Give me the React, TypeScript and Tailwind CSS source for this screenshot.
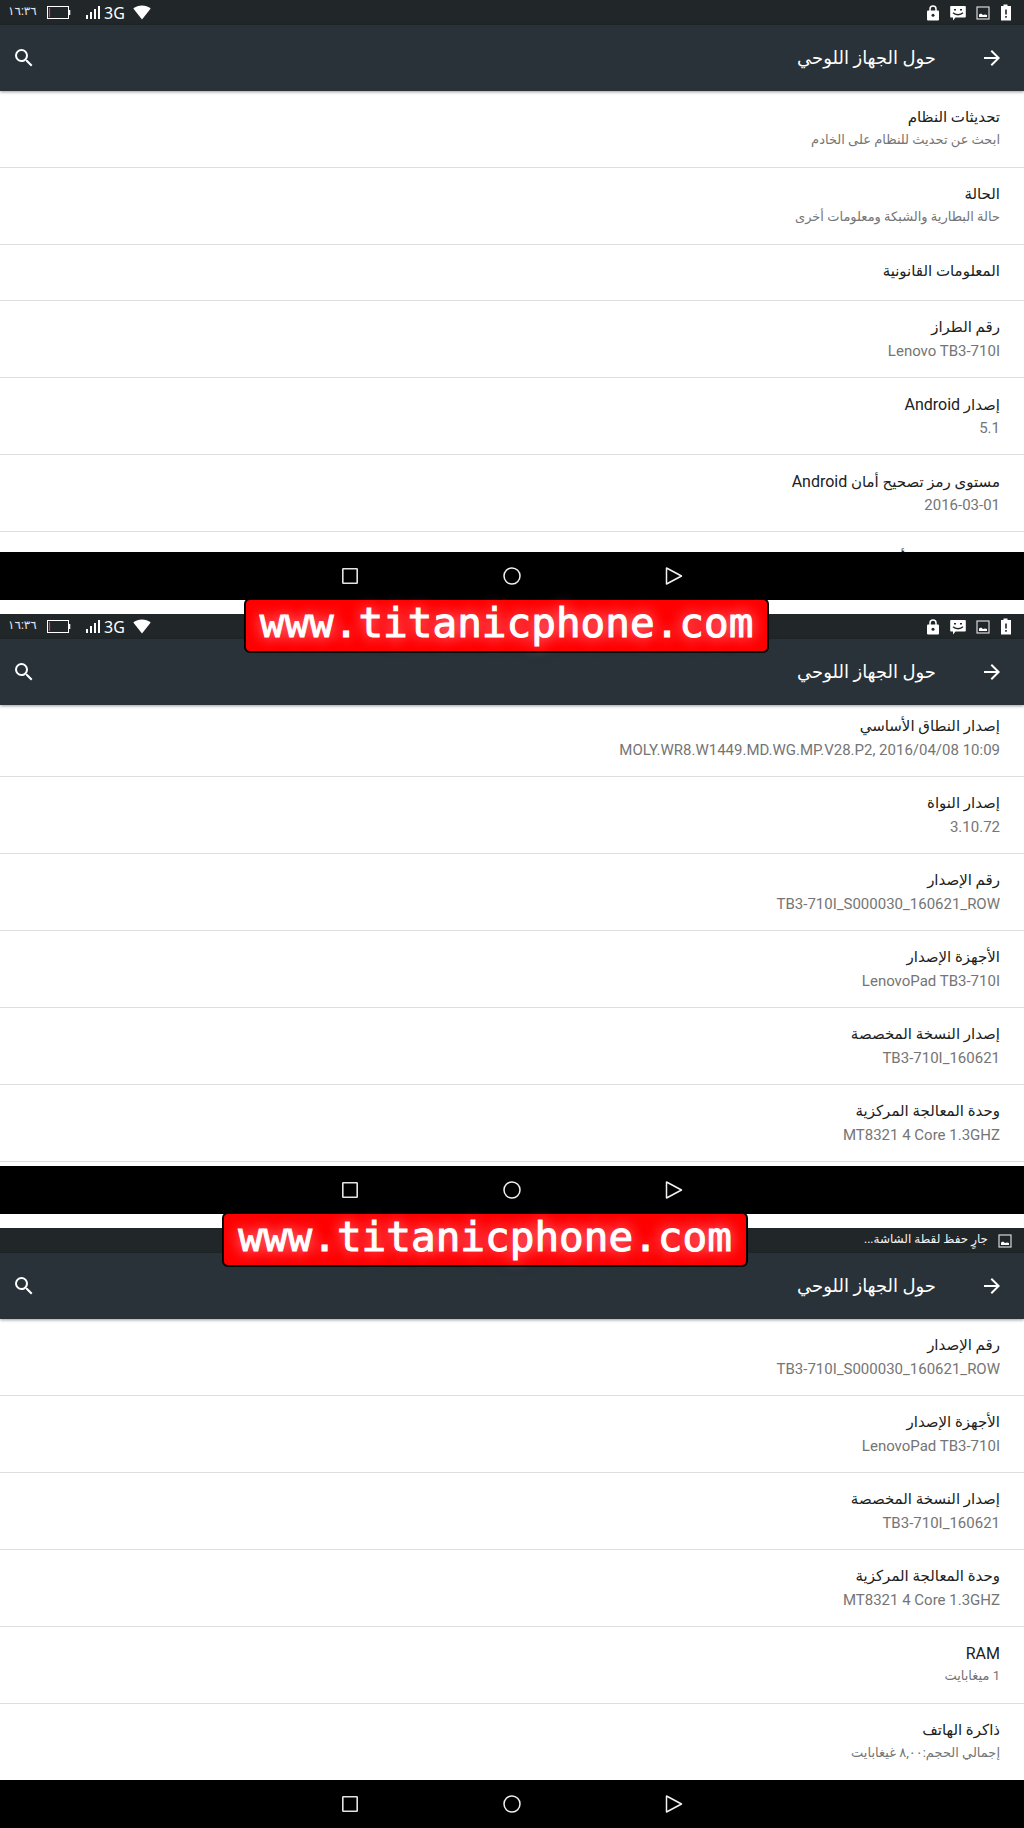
import type { ReactNode } from 'react';

type Row = { title: string; latin?: string; value?: string; arabicValue?: boolean };

const buildRows: Row[] = [
  { title: 'رقم الإصدار', value: 'TB3-710I_S000030_160621_ROW' },
  { title: 'الأجهزة الإصدار', value: 'LenovoPad TB3-710I' },
  { title: 'إصدار النسخة المخصصة', value: 'TB3-710I_160621' },
  { title: 'وحدة المعالجة المركزية', value: 'MT8321 4 Core 1.3GHZ' },
];

const baseband: Row = { title: 'إصدار النطاق الأساسي', value: 'MOLY.WR8.W1449.MD.WG.MP.V28.P2, 2016/04/08 10:09' };

const firstRows: Row[] = [
  { title: 'تحديثات النظام', value: 'ابحث عن تحديث للنظام على الخادم', arabicValue: true },
  { title: 'الحالة', value: 'حالة البطارية والشبكة ومعلومات أخرى', arabicValue: true },
  { title: 'المعلومات القانونية' },
  { title: 'رقم الطراز', value: 'Lenovo TB3-710I' },
  { title: 'إصدار', latin: 'Android', value: '5.1' },
  { title: 'مستوى رمز تصحيح أمان', latin: 'Android', value: '2016-03-01' },
  { title: 'إصدار النطاق الأساسي' },
];

const secondRows: Row[] = [baseband, { title: 'إصدار النواة', value: '3.10.72' }, ...buildRows];

const thirdRows: Row[] = [
  ...buildRows,
  { title: '', latin: 'RAM', value: '1 ميغابايت', arabicValue: true },
  { title: 'ذاكرة الهاتف', value: 'إجمالي الحجم:٨,٠٠ غيغابايت', arabicValue: true },
];

function PictureIcon() {
  return (
    <svg width="14" height="14" viewBox="0 0 14 14" fill="none">
      <rect x="1" y="1" width="12" height="12" stroke="#d5d7d8" strokeWidth="1.2" />
      <path d="M3 11V8.500l2-1 2 1.400L9 8.500l2 .5v2z" fill="#fff" />
    </svg>
  );
}

function StatusIcons() {
  return (
    <div className="flex items-center gap-2.5">
      <svg width="12" height="17" viewBox="0 0 12 17">
        <path d="M3.5 0.5h4v1.5H11V16.500H1V2h2.500z" fill="#fff" />
        <path d="M5.200 5.500h1.600v5H5.200zM5.200 12h1.600v1.700H5.200z" fill="#212629" />
      </svg>
      <PictureIcon />
      <svg width="16" height="16" viewBox="0 0 16 16">
        <path d="M1 1h14a.8.800 0 0 1 .8.800v10a.8.800 0 0 1-.8.800H5.500L3 15.500v-2.900H1a.8.800 0 0 1-.8-.8v-10A.8.800 0 0 1 1 1z" fill="#fff" />
        <path d="M4 4h2v1.600H4zM10 4h2v1.600h-2z" fill="#212629" />
        <path d="M3 7.800c2.500 2.600 7.500 2.600 10 0" fill="none" stroke="#212629" strokeWidth="1.300" />
      </svg>
      <svg width="14" height="16" viewBox="0 0 14 16">
        <path d="M4 7V4a3 3 0 0 1 6 0v3" fill="none" stroke="#fff" strokeWidth="1.500" />
        <rect x="1" y="5.500" width="12" height="10" rx="1" fill="#fff" />
        <circle cx="7" cy="10.300" r="1.500" fill="#212629" />
      </svg>
    </div>
  );
}

function SignalStatus() {
  return (
    <div dir="ltr" className="flex items-center text-white">
      <span className="w-[39px] pb-1 text-xs leading-4 text-gray-200">١٦:٣٦</span>
      <svg width="24" height="14" viewBox="0 0 24 14" fill="none">
        <rect x="0.500" y="0.500" width="21" height="12" stroke="#fff" />
        <path d="M22 4h1.300v5H22z" fill="#fff" />
        <path d="M2.500 2v9" stroke="#d8405f" strokeWidth="1.200" />
      </svg>
      <svg className="ml-[15px]" width="14" height="14" viewBox="0 0 14 14" fill="#fff">
        <path d="M0 9h2v4H0zM4 6h2v7H4zM8 3h2v10H8zM12 0h2v13h-2z" />
      </svg>
      <span className="ml-1 font-['Noto_Sans'] text-base leading-6">3G</span>
      <svg className="ml-2" width="18" height="15" viewBox="0 0 18 15">
        <path d="M9 14.500L0.300 3.600C2.800 1.500 5.700 0.400 9 0.400s6.200 1.100 8.700 3.200z" fill="#fff" />
      </svg>
    </div>
  );
}

function Toolbar() {
  return (
    <header className="relative z-10 flex h-[66px] shrink-0 items-center bg-[#283238] pr-5 pl-3 text-white shadow-[0_1px_3px_rgba(0,0,0,0.4)]">
      <button aria-label="رجوع">
        <svg width="24" height="24" viewBox="0 0 24 24" fill="#fff">
          <path d="M12 4l-1.410 1.410L16.170 11H4v2h12.170l-5.580 5.590L12 20l8-8z" />
        </svg>
      </button>
      <h1 className="mr-11 flex-1 text-lg leading-7">حول الجهاز اللوحي</h1>
      <button aria-label="بحث">
        <svg width="24" height="24" viewBox="0 0 24 24" fill="#fff">
          <path d="M15.500 14h-.79l-.28-.27A6.471 6.471 0 0 0 16 9.500 6.500 6.500 0 1 0 9.500 16c1.610 0 3.090-.59 4.230-1.570l.27.28v.79l5 4.990L20.490 19l-4.990-5zm-6 0C7.010 14 5 11.990 5 9.500S7.010 5 9.500 5 14 7.010 14 9.500 11.990 14 9.500 14z" />
        </svg>
      </button>
    </header>
  );
}

function NavBar() {
  return (
    <nav dir="ltr" className="flex h-12 shrink-0 items-center justify-center gap-[138px] bg-black">
      <button aria-label="التطبيقات الأخيرة">
        <svg width="24" height="24" viewBox="0 0 24 24" fill="none">
          <rect x="4.800" y="4.800" width="14.400" height="14.400" rx="0.500" stroke="#e4e4e4" strokeWidth="1.600" />
        </svg>
      </button>
      <button aria-label="الشاشة الرئيسية">
        <svg width="24" height="24" viewBox="0 0 24 24" fill="none">
          <circle cx="12" cy="12" r="8" stroke="#f2f2f2" strokeWidth="1.500" />
        </svg>
      </button>
      <button aria-label="السابق">
        <svg width="24" height="24" viewBox="0 0 24 24" fill="none">
          <path d="M4.500 4v16L19.500 12z" stroke="#f2f2f2" strokeWidth="1.500" strokeLinejoin="round" />
        </svg>
      </button>
    </nav>
  );
}

function SettingsRow({ row }: { row: Row }) {
  return (
    <li className={`border-b border-[#dedede] px-6 ${row.latin ? 'pt-4' : 'pt-3.5'} ${row.value ? 'min-h-[77px]' : 'min-h-14'}`}>
      <p className={`text-[15px] text-[#212121] ${row.latin ? 'leading-[22px]' : 'leading-6'}`}>
        {row.title} {row.latin && <span className="text-base leading-none">{row.latin}</span>}
      </p>
      {row.value && (
        <p className={row.arabicValue ? 'text-[13px] leading-[22px] text-[#757575]' : 'text-[15px] leading-6 text-[#757575]'}>
          <bdi>{row.value}</bdi>
        </p>
      )}
    </li>
  );
}

function SettingsList({ rows, scrolled }: { rows: Row[]; scrolled?: boolean }) {
  return (
    <main className="min-h-0 flex-1 overflow-hidden bg-white">
      <ul className={scrolled ? '-mt-[5px]' : ''}>
        {rows.map((row) => (
          <SettingsRow key={row.title} row={row} />
        ))}
      </ul>
    </main>
  );
}

function Screen({ status, children }: { status: ReactNode; children: ReactNode }) {
  return (
    <section className="flex aspect-[128/75] w-full flex-col overflow-hidden">
      <div className="flex h-[25px] shrink-0 items-center justify-between bg-[#212629] pr-3 pl-2">{status}</div>
      <Toolbar />
      {children}
      <NavBar />
    </section>
  );
}

function Banner() {
  return (
    <a
      href="#"
      dir="ltr"
      className="flex h-[55px] items-center rounded-md border-2 border-black bg-[#fe0000] px-3.5 pb-1 font-['DejaVu_Sans_Mono',monospace] text-[41px] leading-none text-white [-webkit-text-stroke:1px_white] [text-shadow:0_0_14px_rgba(255,150,170,0.8),0_0_18px_rgba(255,140,160,0.6)]"
    >
      www.titanicphone.com
    </a>
  );
}

export default function App() {
  return (
    <div dir="rtl" className="flex flex-col gap-3.5 bg-white font-[Roboto,'Noto_Sans','DejaVu_Sans',sans-serif]">
      <div className="relative">
        <Screen status={<><StatusIcons /><SignalStatus /></>}>
          <SettingsList rows={firstRows} />
        </Screen>
        <div className="absolute top-full left-[23.8%] z-20 -mt-0.5">
          <Banner />
        </div>
      </div>
      <div className="relative">
        <Screen status={<><StatusIcons /><SignalStatus /></>}>
          <SettingsList rows={secondRows} scrolled />
        </Screen>
        <div className="absolute top-full left-[21.7%] z-20 -mt-0.5">
          <Banner />
        </div>
      </div>
      <Screen
        status={
          <div className="flex items-center gap-2.5 text-xs text-gray-100">
            <PictureIcon />
            <span className="pb-1 leading-4">جارٍ حفظ لقطة الشاشة...</span>
          </div>
        }
      >
        <SettingsList rows={thirdRows} />
      </Screen>
    </div>
  );
}
